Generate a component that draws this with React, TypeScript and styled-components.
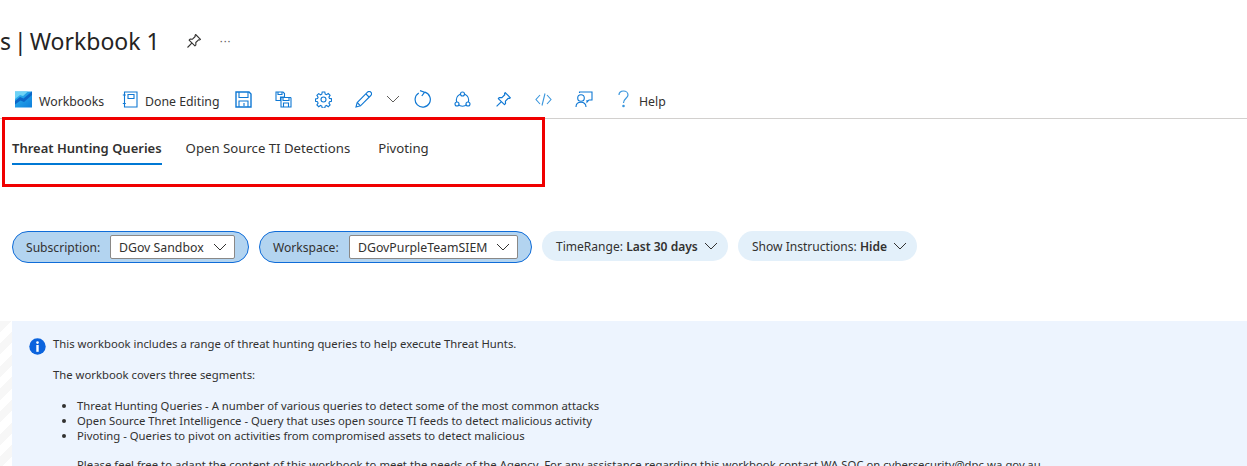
import React from "react";
import styled, { createGlobalStyle } from "styled-components";

const Global = createGlobalStyle`
  html, body { margin: 0; padding: 0; background: #fff; overflow: hidden; }
  body { font-family: "Noto Sans", "Open Sans", Arial, sans-serif; color: #323130; }
`;
const Page = styled.div`
  position: relative; width: 1247px; height: 466px; overflow: hidden;
  display: flex; flex-direction: column;
`;
const TitleBar = styled.header`
  height: 82px; display: flex; align-items: center;
`;
const Title = styled.h1`
  margin: 0; font-size: 23px; font-weight: 400; color: #252423; white-space: pre; line-height: 32px;
`;
const TitleLead = styled.span`
  word-spacing: -3px;
`;
const TitlePin = styled.span`
  display: inline-flex; margin-left: 26px;
`;
const More = styled.span`
  margin-left: 18px; font-size: 11px; letter-spacing: 1px; color: #605e5c; position: relative; top: -1px;
`;
const Toolbar = styled.nav`
  height: 34px; padding-top: 2px; display: flex; align-items: center; padding-left: 15px;
  border-bottom: 1px solid #d2d0ce; box-sizing: content-box;
`;
const ToolItem = styled.span<{ $w: number }>`
  display: flex; align-items: center; width: ${p => p.$w}px; flex: none;
  font-size: 12.3px; color: #323130; gap: 7px; white-space: nowrap;
  svg { position: relative; top: -2px; }
`;
const Tabs = styled.div`
  height: 45px; margin-top: 6px; padding-left: 12px; display: flex; align-items: flex-start;
`;
const Tab = styled.div<{ $active?: boolean; $gap: number }>`
  margin-right: ${p => p.$gap}px; height: 40px; box-sizing: border-box; padding-top: 13px;
  font-size: ${p => (p.$active ? 13 : 13.2)}px; line-height: 20px; white-space: nowrap; color: #323130;
  font-weight: ${p => (p.$active ? 600 : 400)};
  border-bottom: 2px solid ${p => (p.$active ? "#0078d4" : "transparent")};
`;
const RedBox = styled.div`
  position: absolute; left: 2px; top: 117px; width: 543px; height: 70px;
  box-sizing: border-box; border: 3px solid #f00000;
`;
const Params = styled.div`
  margin-top: 61px; height: 32px; padding-left: 12px; display: flex; align-items: flex-start; gap: 10px;
`;
const DropPill = styled.div<{ $w: number }>`
  width: ${p => p.$w}px; height: 32px; box-sizing: border-box; flex: none;
  background: #b3d4f0; border: 1px solid #0f6cd8; border-radius: 16px;
  display: flex; align-items: center; padding-left: 13px; font-size: 12.1px; color: #323130;
`;
const PillLabel = styled.span<{ $w: number }>`
  width: ${p => p.$w}px; flex: none; white-space: nowrap;
`;
const Select = styled.div<{ $w: number }>`
  width: ${p => p.$w}px; height: 24px; box-sizing: border-box; flex: none; background: #fff;
  border: 1px solid #8a8886; border-radius: 2px; display: flex; align-items: center;
  justify-content: space-between; padding: 0 7px 0 8px; font-size: 12.3px; white-space: nowrap;
`;
const TextPill = styled.div<{ $w: number }>`
  width: ${p => p.$w}px; height: 30px; box-sizing: border-box; flex: none; background: #e3f0fa;
  border-radius: 15px; display: flex; align-items: center; justify-content: space-between;
  padding: 0 10px 0 14px; font-size: 12.05px; white-space: nowrap;
  b { font-weight: 600; }
`;
const InfoWrap = styled.div`
  margin-top: 58px; flex: 1; min-height: 0; padding-left: 12px;
  background: repeating-linear-gradient(135deg, #f7f7f7 0 8px, #fff 8px 16px);
`;
const Info = styled.section`
  height: 100%; background: #edf4fe; display: flex; padding: 15px 0 0 17px; box-sizing: border-box;
  font-size: 11.3px; line-height: 15px; color: #323130; overflow: hidden;
`;
const InfoIcon = styled.span`
  flex: none; width: 17px; height: 17px; margin: 2px 7px 0 0; display: flex;
`;
const InfoBody = styled.div`
  white-space: nowrap;
  p { margin: 0 0 16px; }
`;
const Bullets = styled.ul`
  margin: 0 0 14px; padding-left: 24px;
`;
const Note = styled.p`
  padding-left: 24px; letter-spacing: 0.025px;
`;

const C = "#0f78d4";
const S = { fill: "none", stroke: C, strokeWidth: 1.1 } as const;
const Chev = ({ size = 14, color = "#323130" }: { size?: number; color?: string }) => (
  <svg width={size} height={size} viewBox="0 0 14 14"><path d="M1 4 7 10l6-6" fill="none" stroke={color} strokeWidth="1" /></svg>
);
const Pin = ({ color, size = 16 }: { color: string; size?: number }) => (
  <svg width={size} height={size} viewBox="0 0 16 16" fill="none" stroke={color} strokeWidth="1.1" strokeLinejoin="round">
    <path d="M9.600 1.500 14.500 6.400l-1 .6-1-.2-2.700 2.700.1 2.400-1 1L3.100 7.100l1-1 2.400.1 2.700-2.700-.2-1z" />
    <path d="M5.800 10.200 1.500 14.500" />
  </svg>
);

export default function App() {
  return (
    <Page>
      <Global />
      <TitleBar>
        <Title><TitleLead>s | </TitleLead>Workbook 1</Title>
        <TitlePin><Pin color="#323130" /></TitlePin>
        <More>···</More>
      </TitleBar>
      <Toolbar>
        <ToolItem $w={107}>
          <svg width="17" height="17" viewBox="0 0 17 17">
            <defs><linearGradient id="wb" x1="0" y1="0" x2="1" y2="1"><stop offset="0" stopColor="#2fb6ee" /><stop offset="1" stopColor="#0f7fdc" /></linearGradient></defs>
            <path d="M0 .5h17v16H0z" fill="url(#wb)" />
            <path d="M0 .5h13L8 5 5 4 0 8z" fill="#6ed3f6" />
            <path d="M0 10 5 6l3.500 1.500L17 .5v3.500L9 11 5.500 9.500 0 13.500z" fill="#0c66c8" />
          </svg>
          <span>Workbooks</span>
        </ToolItem>
        <ToolItem $w={113}>
          <svg width="16" height="17" viewBox="0 0 16 17" {...S}>
            <path d="M2.500 1h12.500v15H2.500z" /><path d="M6 3.500h6v4H6z" /><path d="M.8 4h3M.8 12.500h3" />
          </svg>
          <span>Done Editing</span>
        </ToolItem>
        <ToolItem $w={40}>
          <svg width="17" height="17" viewBox="0 0 17 17" fill="none" stroke={C} strokeWidth="1.400">
            <path d="M1 1h13l2 2v13H1z" /><path d="M4 1v5.500h9V1" strokeWidth="1.100" /><path d="M4 16v-6h9v6M9 12v3" strokeWidth="1.100" />
          </svg>
        </ToolItem>
        <ToolItem $w={40}>
          <svg width="17" height="17" viewBox="0 0 17 17" {...S}>
            <path d="M1 1h7l1.500 1.500V6H5.500v3.500H1z" /><path d="M3 1v2.500h4V1" />
            <path d="M6 6.500h9.500l.5.500v9H6z" /><path d="M8 6.500v3h6v-3M8.500 16v-4h5v4" />
          </svg>
        </ToolItem>
        <ToolItem $w={40}>
          <svg width="17" height="17" viewBox="0 0 17 17" {...S}>
            <circle cx="8.500" cy="8.500" r="2.500" />
            <path d="M7.200 1h2.600l.4 2.100 1.300.6 1.800-1.200 1.800 1.800-1.200 1.800.6 1.300 2 .4v2.600l-2 .4-.6 1.300 1.200 1.800-1.800 1.800-1.800-1.200-1.300.6-.4 2h-2.600l-.4-2-1.300-.6-1.800 1.200-1.800-1.800 1.200-1.800-.6-1.300-2-.4V7.900l2-.4.600-1.300-1.200-1.800 1.800-1.800 1.800 1.200 1.300-.6z" />
          </svg>
        </ToolItem>
        <ToolItem $w={31}>
          <svg width="17" height="17" viewBox="0 0 17 17" {...S}>
            <path d="M1 16l1.200-4.500L12.500 1.200a1.800 1.800 0 0 1 3.300 3.300L5.500 14.800z" /><path d="M11 3l3 3M2.200 11.500l3.300 3.300" />
          </svg>
        </ToolItem>
        <ToolItem $w={28}><Chev color="#605e5c" /></ToolItem>
        <ToolItem $w={40}>
          <svg width="18" height="18" viewBox="0 0 18 18" {...S} strokeWidth="1.200">
            <path d="M10.800 2.200A7.600 7.600 0 1 1 4.800 3" /><path d="M6 .6 10.600 2.200 7.800 6" />
          </svg>
        </ToolItem>
        <ToolItem $w={41}>
          <svg width="17" height="17" viewBox="0 0 17 17" {...S}>
            <circle cx="8.500" cy="9" r="6.200" />
            <circle cx="8.500" cy="3" r="2" fill="#fff" /><circle cx="3" cy="13" r="2" fill="#fff" /><circle cx="14" cy="13" r="2" fill="#fff" />
          </svg>
        </ToolItem>
        <ToolItem $w={40}><Pin color={C} size={17} /></ToolItem>
        <ToolItem $w={40}>
          <svg width="17" height="17" viewBox="0 0 17 17" fill="none" stroke="#3a96dd" strokeWidth="1.100">
            <path d="M5 4 1 8.500 5 13M12 4l4 4.500-4 4.500M10 2.500 7 14.500" />
          </svg>
        </ToolItem>
        <ToolItem $w={42}>
          <svg width="18" height="17" viewBox="0 0 18 17" {...S}>
            <circle cx="6" cy="7" r="3.300" /><path d="M1 16c0-3 2-4.800 5-4.800s5 1.800 5 4.800" />
            <path d="M4.500 2V1H17v8h-3l-2 2.200V9" />
          </svg>
        </ToolItem>
        <ToolItem $w={60}>
          <svg width="15" height="18" viewBox="0 0 15 18" fill="none" stroke="#3a96dd" strokeWidth="1.200">
            <path d="M2 5c0-2.500 2-4 4.500-4S11 2.800 11 5c0 3.300-4.500 3.500-4.500 8" /><circle cx="6.500" cy="16" r=".7" />
          </svg>
          <span>Help</span>
        </ToolItem>
      </Toolbar>
      <Tabs>
        <Tab $active $gap={24}>Threat Hunting Queries</Tab>
        <Tab $gap={28}>Open Source TI Detections</Tab>
        <Tab $gap={0}>Pivoting</Tab>
      </Tabs>
      <RedBox />
      <Params>
        <DropPill $w={237}>
          <PillLabel $w={84}>Subscription:</PillLabel>
          <Select $w={125}><span>DGov Sandbox</span><Chev /></Select>
        </DropPill>
        <DropPill $w={273}>
          <PillLabel $w={76}>Workspace:</PillLabel>
          <Select $w={169}><span>DGovPurpleTeamSIEM</span><Chev /></Select>
        </DropPill>
        <TextPill $w={186}><span>TimeRange: <b>Last 30 days</b></span><Chev /></TextPill>
        <TextPill $w={179}><span>Show Instructions: <b>Hide</b></span><Chev /></TextPill>
      </Params>
      <InfoWrap>
        <Info>
          <InfoIcon>
            <svg width="17" height="17" viewBox="0 0 17 17">
              <circle cx="8.500" cy="8.500" r="8.200" fill="#0b63dd" />
              <circle cx="8.500" cy="4.600" r="1.300" fill="#fff" />
              <path d="M7.300 7h2.400v6.800H7.300z" fill="#fff" />
            </svg>
          </InfoIcon>
          <InfoBody>
            <p>This workbook includes a range of threat hunting queries to help execute Threat Hunts.</p>
            <p>The workbook covers three segments:</p>
            <Bullets>
              <li>Threat Hunting Queries - A number of various queries to detect some of the most common attacks</li>
              <li>Open Source Thret Intelligence - Query that uses open source TI feeds to detect malicious activity</li>
              <li>Pivoting - Queries to pivot on activities from compromised assets to detect malicious</li>
            </Bullets>
            <Note>Please feel free to adapt the content of this workbook to meet the needs of the Agency. For any assistance regarding this workbook contact WA SOC on cybersecurity@dpc.wa.gov.au</Note>
          </InfoBody>
        </Info>
      </InfoWrap>
    </Page>
  );
}
